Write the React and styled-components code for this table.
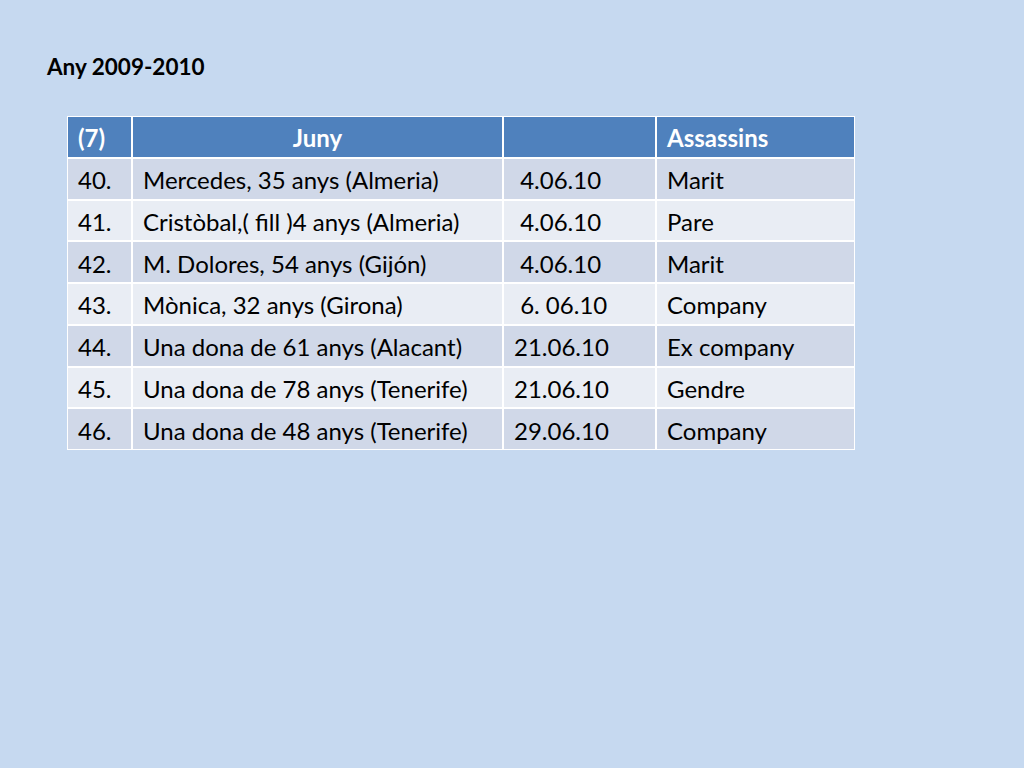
import React from 'react';
import styled, { createGlobalStyle } from 'styled-components';

const GlobalStyle = createGlobalStyle`
  html, body {
    margin: 0;
    padding: 0;
    background: #c6d9f0;
  }
  body {
    font-family: Lato, "Noto Sans", "Liberation Sans", sans-serif;
    color: #000;
  }
`;

const Slide = styled.div`
  width: 1024px;
  height: 768px;
  box-sizing: border-box;
  padding: 53px 0 0 47px;
  background: #c6d9f0;
`;

const Title = styled.h1`
  margin: 0;
  font-size: 22.5px;
  font-weight: 700;
  line-height: 28px;
  color: #000;
`;

const Table = styled.div`
  display: grid;
  grid-template-columns: 63px 369px 151px 197px;
  grid-auto-rows: 39.75px;
  gap: 2px;
  padding: 1px;
  margin: 35px 0 0 20px;
  width: max-content;
  background: #ffffff;
`;

const Cell = styled.div`
  display: flex;
  align-items: center;
  justify-content: ${(p) => (p.$center ? 'center' : 'flex-start')};
  padding: 2px 10px 0 10px;
  font-size: 24px;
  white-space: pre;
  background: ${(p) => (p.$head ? '#4f81bd' : p.$odd ? '#d0d8e8' : '#e9edf4')};
  color: ${(p) => (p.$head ? '#ffffff' : '#000000')};
  font-weight: ${(p) => (p.$head ? 700 : 400)};
`;

const rows = [
  ['40.', 'Mercedes, 35 anys (Almeria)', ' 4.06.10', 'Marit'],
  ['41.', 'Cristòbal,( fill )4 anys (Almeria)', ' 4.06.10', 'Pare'],
  ['42.', 'M. Dolores, 54 anys (Gijón)', ' 4.06.10', 'Marit'],
  ['43.', 'Mònica, 32 anys (Girona)', ' 6. 06.10', 'Company'],
  ['44.', 'Una dona de 61 anys (Alacant)', '21.06.10', 'Ex company'],
  ['45.', 'Una dona de 78 anys (Tenerife)', '21.06.10', 'Gendre'],
  ['46.', 'Una dona de 48 anys (Tenerife)', '29.06.10', 'Company'],
];

export default function App() {
  return (
    <Slide>
      <GlobalStyle />
      <Title>Any 2009-2010</Title>
      <Table>
        <Cell $head>(7)</Cell>
        <Cell $head $center>Juny</Cell>
        <Cell $head />
        <Cell $head>Assassins</Cell>
        {rows.map((r, i) =>
          r.map((text, j) => (
            <Cell key={`${i}-${j}`} $odd={i % 2 === 0}>
              {text}
            </Cell>
          ))
        )}
      </Table>
    </Slide>
  );
}
